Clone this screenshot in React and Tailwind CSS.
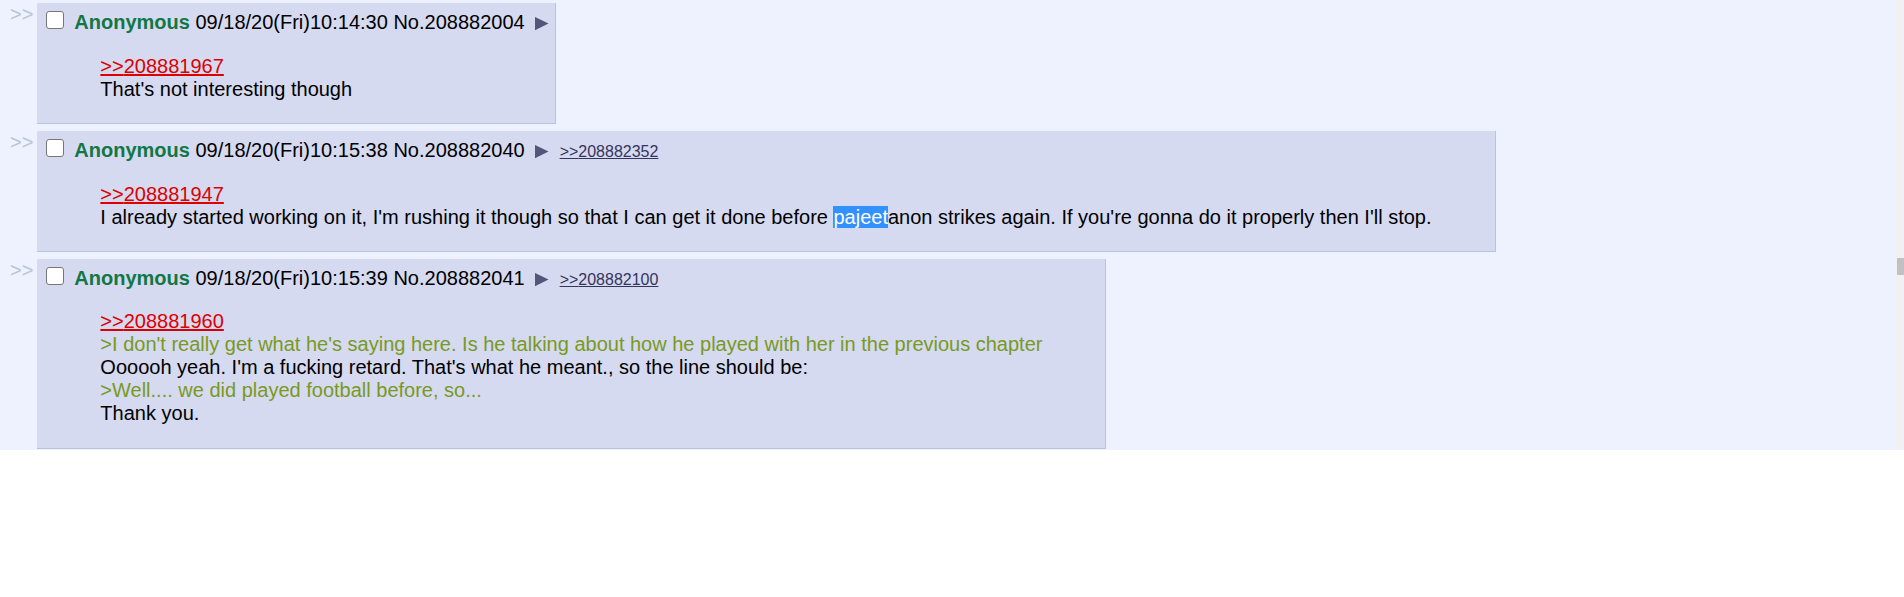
const posts = [
  {
    date: '09/18/20(Fri)10:14:30',
    no: '208882004',
    backlinks: [],
    quote: '208881967',
    lines: [[{ s: "That's not interesting though" }]],
    gap: 'mt-0',
  },
  {
    date: '09/18/20(Fri)10:15:38',
    no: '208882040',
    backlinks: ['208882352'],
    quote: '208881947',
    lines: [
      [
        { s: "I already started working on it, I'm rushing it though so that I can get it done before " },
        { s: 'pajeet', sel: true },
        { s: "anon strikes again. If you're gonna do it properly then I'll stop." },
      ],
    ],
    gap: 'mt-[7px]',
  },
  {
    date: '09/18/20(Fri)10:15:39',
    no: '208882041',
    backlinks: ['208882100'],
    quote: '208881960',
    lines: [
      [{ s: ">I don't really get what he's saying here. Is he talking about how he played with her in the previous chapter", green: true }],
      [{ s: "Oooooh yeah. I'm a fucking retard. That's what he meant., so the line should be:" }],
      [{ s: '>Well.... we did played football before, so...', green: true }],
      [{ s: 'Thank you.' }],
    ],
    gap: 'mt-[6.5px]',
  },
];

function Segment({ seg }) {
  if (seg.sel) return <span className="bg-[#3390ff] text-white">{seg.s}</span>;
  if (seg.green) return <span className="text-[#789922]">{seg.s}</span>;
  return <span>{seg.s}</span>;
}

function Post({ p }) {
  return (
    <div className={`flex items-start ${p.gap}`}>
      {/* side arrows */}
      <div className="mr-[4px] leading-[23px] text-[#b7c5d9]">&gt;&gt;</div>

      <div className="w-fit bg-[#d6daf0] border-r border-b border-[#b7c5d9] p-[3px]">
        {/* post info */}
        <div className="h-[29px] pt-[5px] leading-[23px] whitespace-nowrap text-black">
          <input
            type="checkbox"
            className="appearance-none inline-block align-top ml-[6px] w-[18px] h-[18px] rounded-[3px] border-[1.5px] border-[#767676] bg-white"
          />
          <span className="ml-[10px] font-bold text-[#117743]">Anonymous</span>
          {' '}{p.date} No.{p.no}
          <span className="inline-block align-top ml-[7.5px] w-[20px] h-[23px]">
            <svg width="20" height="23" viewBox="0 0 20 23">
              <polygon points="3,6 16.5,12.6 3,19.2" fill="#55557a" />
            </svg>
          </span>
          {p.backlinks.map((b) => (
            <a key={b} className="ml-[7.5px] text-[16px] text-[#34345c] underline">
              &gt;&gt;{b}
            </a>
          ))}
        </div>

        {/* message */}
        <div className="mx-[60px] my-[19.5px] leading-[23px] text-black whitespace-nowrap">
          <div>
            <a className="text-[#dd0000] underline">&gt;&gt;{p.quote}</a>
          </div>
          {p.lines.map((line, i) => (
            <div key={i}>
              {line.map((seg, j) => (
                <Segment key={j} seg={seg} />
              ))}
            </div>
          ))}
        </div>
      </div>
    </div>
  );
}

export default function App() {
  return (
    <div className="flex h-[450px] w-[1904px] text-[20px] font-['Liberation_Sans',Arial,sans-serif]">
      <div className="flex-1 bg-[#eef2ff] pl-[10px] pt-[3px]">
        {posts.map((p) => (
          <Post key={p.no} p={p} />
        ))}
      </div>
      {/* scrollbar */}
      <div className="w-[9px] bg-[#f1f1f1]">
        <div className="ml-[2px] mt-[258px] h-[17px] bg-[#c1c1c1]" />
      </div>
    </div>
  );
}
